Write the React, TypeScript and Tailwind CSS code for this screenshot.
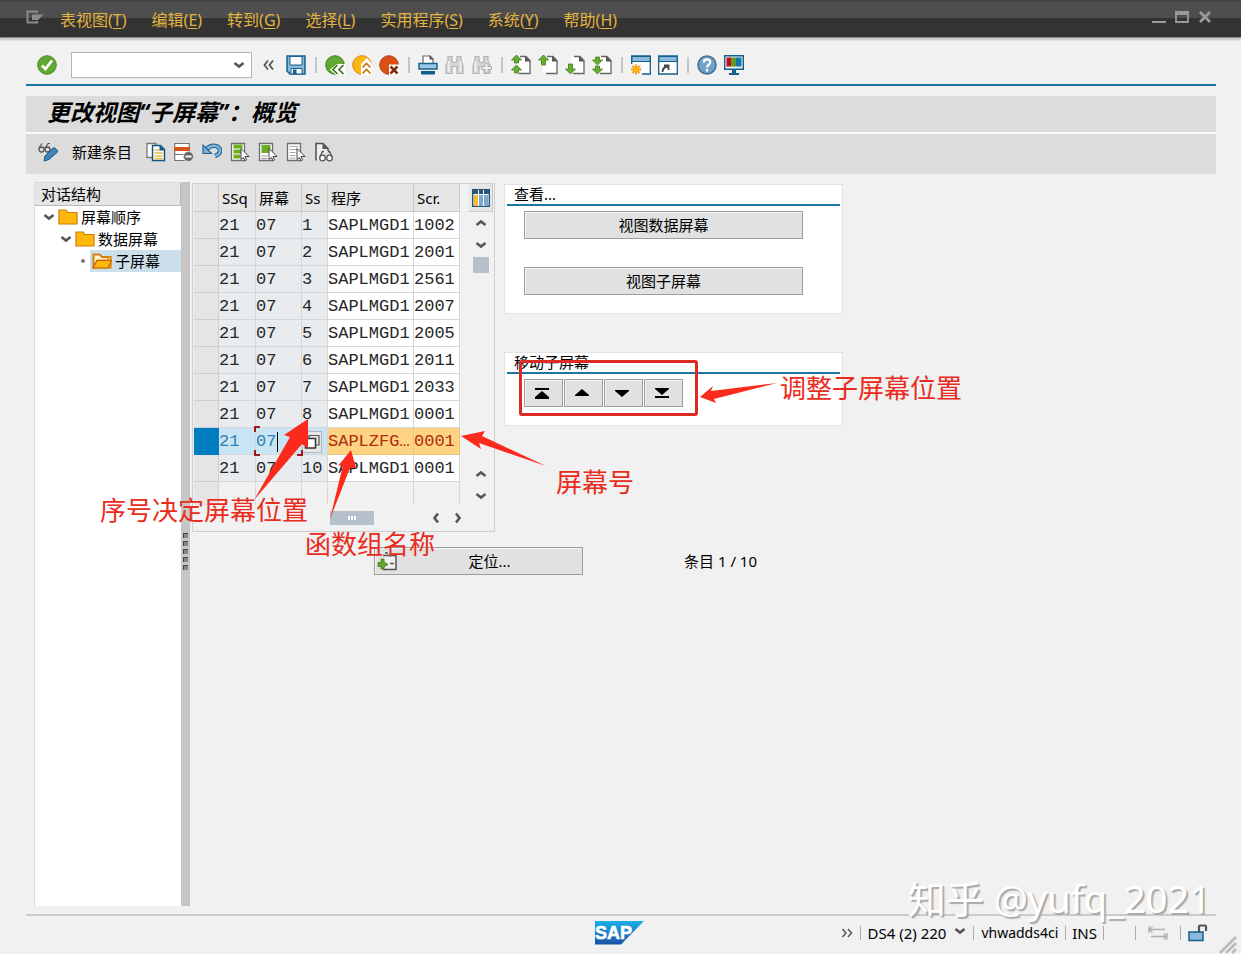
import React from "react";

type P = { children: React.ReactNode; w?: number; h?: number };

function Ico({ children, w = 20, h = 20 }: P) {
  return (
    <svg width={w} height={h} viewBox={`0 0 ${w} ${h}`} fill="none" className="block shrink-0" aria-hidden="true">
      {children}
    </svg>
  );
}

function IconButton({ label, children }: { label: string; children: React.ReactNode }) {
  return (
    <button type="button" aria-label={label} className="block shrink-0">
      {children}
    </button>
  );
}

function Sep() {
  return <span className="ml-0.5 mr-px h-4 w-0.5 shrink-0 bg-[#c3c6c8]" />;
}

function StatusSep() {
  return <span className="h-3.5 w-px shrink-0 bg-[#ababab]" />;
}

function Chevron({ dir }: { dir: "up" | "down" | "left" | "right" }) {
  const d = {
    up: "M1.5 8 6 4.5 10.500 8",
    down: "M1.5 4 6 7.500 10.500 4",
    left: "M8 1.5 4.500 6 8 10.500",
    right: "M4 1.5 7.500 6 4 10.500",
  }[dir];
  return (
    <Ico w={12} h={12}>
      <path d={d} stroke="#555" strokeWidth="2.600" />
    </Ico>
  );
}

const Page = () => (
  <>
    <path d="M7 1.500h8l4 4v13H5V13M7 1.500V3" fill="#fff" />
    <path d="M9 1.500h6l4 4v13H8" stroke="#666" strokeWidth="1.300" />
    <path d="M14 1v5.500h5.500z" fill="#555" />
  </>
);

function Arrow({ y, flip, tall }: { y: number; flip?: boolean; tall?: boolean }) {
  const t = tall ? 5 : 3;
  const d = flip
    ? `M5.500 ${y}l5-5H7.500v-${t}h-4v${t}H.500z`
    : `M5.500 ${y}l5 5H7.500v${t}h-4v-${t}H.500z`;
  return <path d={d} fill="#69ad33" stroke="#3d7d17" strokeWidth=".8" />;
}

const Bino = ({ plus }: { plus?: boolean }) => (
  <Ico>
    <path
      d="M3 1.500h4v4l1 2h3l1-2v-4h4v4l2 5v8h-6v-7H7v7H1v-8l2-5z"
      fill="#d6d6d6"
      stroke="#b3b3b3"
      strokeWidth="1.200"
    />
    <path d="M3.500 6v11M15.500 6v11" stroke="#f2f2f2" strokeWidth="1.500" />
    {plus && <path d="M13 8h3v3.500h3.500v3H16V18h-3v-3.500H9.500v-3H13z" fill="#ececec" stroke="#adadad" />}
  </Ico>
);

const PageLines = ({ children }: { children?: React.ReactNode }) => (
  <Ico>
    <path d="M1.500 1.500h13v17h-13z" fill="#fff" stroke="#6d6d6d" strokeWidth="1.300" />
    {children}
    <path d="M11 6.500v11l2.500-2 1.500 3.500 1.500-1-1.500-3.500h4z" fill="#fff" stroke="#444" />
  </Ico>
);

function Folder({ open }: { open?: boolean }) {
  return (
    <Ico>
      <path d="M1 3h7l2 2.500h9V17H1z" fill="#ffb90a" stroke="#d17c0b" strokeWidth="1.200" />
      {open && (
        <>
          <path d="M2 4h5.500l2 2.500H16V9H5L2 15z" fill="#fff4d0" stroke="#d17c0b" />
          <path d="M1 17 5 9.500h14.500L16 17z" fill="#ffb90a" stroke="#c8640b" strokeWidth="1.200" />
        </>
      )}
    </Ico>
  );
}

const menus: [string, string][] = [
  ["表视图", "T"],
  ["编辑", "E"],
  ["转到", "G"],
  ["选择", "L"],
  ["实用程序", "S"],
  ["系统", "Y"],
  ["帮助", "H"],
];

function TitleBar() {
  return (
    <header className="flex h-[38px] shrink-0 items-center border-b border-[#8a8a8a] bg-[linear-gradient(#3f3f3f_0,#4e4e4e_3px,#4e4e4e_18px,#333_18px,#333_100%)] pl-[26px] pr-[29px] shadow-[0_2px_2px_#c2c2c2]">
      <div className="mb-1 mr-4">
        <Ico w={18} h={14}>
          <path d="M11 3V1.500H1.500v11H11V11" stroke="#8c8c8c" strokeWidth="2" />
          <path d="M6 4.500h11.500L12 10H6z" fill="#8c8c8c" />
        </Ico>
      </div>
      <nav className="flex flex-1 gap-[25px] pt-0.5 text-base text-[#e3b341]">
        {menus.map(([t, k]) => (
          <button key={k} type="button" className="whitespace-nowrap">
            {t}(<u className="underline-offset-2">{k}</u>)
          </button>
        ))}
      </nav>
      <div className="flex items-center gap-[9px] pb-1">
        <IconButton label="最小化">
          <Ico w={14} h={14}>
            <path d="M0 12h14" stroke="#9a9a9a" strokeWidth="2" />
          </Ico>
        </IconButton>
        <IconButton label="最大化">
          <Ico w={14} h={14}>
            <path d="M1 2h12v10H1z" stroke="#9a9a9a" strokeWidth="1.800" />
            <path d="M0 3h14" stroke="#9a9a9a" strokeWidth="4" />
          </Ico>
        </IconButton>
        <IconButton label="关闭">
          <Ico w={14} h={14}>
            <path d="M2 2l10 10M12 2 2 12" stroke="#9a9a9a" strokeWidth="2.800" />
          </Ico>
        </IconButton>
      </div>
    </header>
  );
}

function SystemToolbar() {
  return (
    <div className="ml-[26px] mr-[25px] flex h-12 shrink-0 items-center border-b-2 border-[#1c75a5] pb-px pl-[11px] pt-2">
      <IconButton label="确认">
        <Ico>
          <circle cx="10" cy="10" r="9.300" fill="#5fa832" stroke="#4a8a22" />
          <path d="M5 10.500 8.500 14 15 5.500" stroke="#fff" strokeWidth="2.800" />
        </Ico>
      </IconButton>
      <div className="ml-3.5 flex h-[26px] w-[181px] items-center border border-[#b5b5b5] bg-white pr-1.5">
        <input aria-label="命令" className="h-full min-w-0 flex-1 bg-transparent px-1 outline-none" />
        <Chevron dir="down" />
      </div>
      <button type="button" aria-label="收起" className="ml-[11px] mr-3">
        <Ico w={11} h={12}>
          <path d="M5 1.500 1.500 6 5 10.500M10 1.500 6.500 6 10 10.500" stroke="#555" strokeWidth="1.800" />
        </Ico>
      </button>
      <div className="flex items-center gap-[7px]">
        <IconButton label="保存">
          <Ico>
            <path d="M1 1h18v18H4l-3-3z" fill="#8db9dc" stroke="#155f8c" strokeWidth="1.500" />
            <path d="M4 1.500h12V10H4z" fill="#fff" stroke="#155f8c" />
            <path d="M5 13.500h11V19H5z" fill="#fff" stroke="#155f8c" />
            <path d="M7 14.500h3.500V19H7z" fill="#155f8c" />
          </Ico>
        </IconButton>
        <Sep />
        <IconButton label="返回">
          <Ico>
            <circle cx="10" cy="10" r="9.300" fill="#5fa832" stroke="#3f831d" />
            <path d="M12 9 5 14.500l6 5.500h9V9z" fill="#fff" />
            <path d="M12.500 10 8 14.500l4.500 4.500M18.500 10 14 14.500l4.500 4.500" stroke="#3a7519" strokeWidth="1.700" />
          </Ico>
        </IconButton>
        <IconButton label="退出">
          <Ico>
            <circle cx="10" cy="10" r="9.300" fill="#fdb515" stroke="#d8860c" />
            <path d="M9 20V9l6-6 5 6v11z" fill="#fff" />
            <path d="M10.500 12.500 14.500 8.500l4 4M10.500 18.500l4-4 4 4" stroke="#c9700e" strokeWidth="1.700" />
          </Ico>
        </IconButton>
        <IconButton label="取消">
          <Ico>
            <circle cx="10" cy="10" r="9.300" fill="#dc5113" stroke="#a93d0d" />
            <path d="M10 9.500h10V20H10z" fill="#fff" />
            <path d="M11.500 11.500l7 7M18.500 11.500l-7 7" stroke="#802b10" strokeWidth="2.500" />
          </Ico>
        </IconButton>
        <Sep />
        <IconButton label="打印">
          <Ico>
            <path d="M5 9V1h7l3 3v5z" fill="#fff" stroke="#666" strokeWidth="1.200" />
            <path d="M11.500 0v4.500H16z" fill="#555" />
            <path d="M1 8.500h18V14H1z" fill="#9cc8e6" stroke="#155f8c" strokeWidth="1.400" />
            <path d="M3 16h14v3.500H3z" fill="#0d5f8c" />
          </Ico>
        </IconButton>
        <IconButton label="查找">
          <Bino />
        </IconButton>
        <IconButton label="继续查找">
          <Bino plus />
        </IconButton>
        <Sep />
        <IconButton label="首页">
          <Ico>
            <Page />
            <Arrow y={0} />
            <Arrow y={10} />
          </Ico>
        </IconButton>
        <IconButton label="上一页">
          <Ico>
            <Page />
            <Arrow y={0} tall />
          </Ico>
        </IconButton>
        <IconButton label="下一页">
          <Ico>
            <Page />
            <Arrow y={19} flip tall />
          </Ico>
        </IconButton>
        <IconButton label="末页">
          <Ico>
            <Page />
            <Arrow y={10} flip />
            <Arrow y={19} flip />
          </Ico>
        </IconButton>
        <Sep />
        <IconButton label="新建会话">
          <Ico>
            <path d="M.700 1h18.600v18H.700z" fill="#fff" stroke="#155f8c" strokeWidth="1.300" />
            <path d="M1 1.500h18v5H1z" fill="#8db9dc" stroke="#155f8c" />
            <path d="M0 9h11v11H0z" fill="#f2f2f2" />
            <path d="M5 9.500v10M0 14.500h10M1.500 11l7 7M8.500 11l-7 7" stroke="#f29a12" strokeWidth="1.800" />
            <circle cx="5" cy="14.500" r="2.800" fill="#ffb400" />
          </Ico>
        </IconButton>
        <IconButton label="生成快捷方式">
          <Ico>
            <path d="M.700 1h18.600v18H.700z" fill="#fff" stroke="#155f8c" strokeWidth="1.300" />
            <path d="M1 1.500h18v5H1z" fill="#8db9dc" stroke="#155f8c" />
            <path d="M4.500 17c0-4 2-5 5-5.500M6 10.500h4.500V15" stroke="#444" strokeWidth="1.800" />
          </Ico>
        </IconButton>
        <Sep />
        <IconButton label="帮助">
          <Ico>
            <circle cx="10" cy="10" r="9" fill="#6ea3cb" stroke="#466f91" strokeWidth="1.500" />
            <path d="M6.800 7.500c0-4 6.500-4 6.500-.300 0 2.500-3.200 2.500-3.200 5.300M10.100 14v2.500" stroke="#fff" strokeWidth="2.200" />
          </Ico>
        </IconButton>
        <IconButton label="定制本地布局">
          <Ico>
            <path d="M.700.700h18.600v13.600H.700z" fill="#e6eef4" stroke="#155f8c" strokeWidth="1.400" />
            <path d="M2.500 2.500H7v9H2.500z" fill="#c40d1c" />
            <path d="M7 2.500h5v9H7z" fill="#5d9c28" />
            <path d="M12 2.500h5.500v9H12z" fill="#1079a8" />
            <path d="M8 15h4v3h3v2H5v-2h3z" fill="#155f8c" />
          </Ico>
        </IconButton>
      </div>
    </div>
  );
}

function ViewToolbar() {
  return (
    <div className="flex h-10 items-center bg-[#dcdcdc] pb-1 pl-3">
      <IconButton label="显示/更改">
        <Ico>
          <circle cx="3.500" cy="7.500" r="2.500" stroke="#555" strokeWidth="1.300" />
          <circle cx="9.500" cy="7.500" r="2.500" stroke="#555" strokeWidth="1.300" />
          <path d="M1 6 4 1.500M7 6l3-4.500h2" stroke="#555" strokeWidth="1.200" />
          <path d="M6 19l1-5 8-8h2l2.500 2.500v1.500L11 17.500z" fill="#3f86b8" stroke="#1c5c8a" />
        </Ico>
      </IconButton>
      <button type="button" className="ml-3.5 mr-3.5 whitespace-nowrap">
        新建条目
      </button>
      <div className="flex gap-2">
        <IconButton label="复制">
          <Ico>
            <path d="M1 1.500h9v14H1z" fill="#fff" stroke="#777" strokeWidth="1.300" />
            <path d="M6.500 3.500h8l4 4v11h-12z" fill="#fff" stroke="#12577f" strokeWidth="1.500" />
            <path d="M8.500 8h5M8.500 11h8M8.500 14h8M8.500 16.500h8" stroke="#e7c13b" strokeWidth="1.300" />
            <path d="M13.500 3v5.500h5z" fill="#12577f" />
          </Ico>
        </IconButton>
        <IconButton label="删除">
          <Ico>
            <path d="M.700 1.500h14.600v17H.700z" fill="#fff" stroke="#777" strokeWidth="1.200" />
            <path d="M0 5h16v4H0z" fill="#d9541a" />
            <path d="M.500 12.500h9" stroke="#777" />
            <circle cx="14.500" cy="14.500" r="5" fill="#666" stroke="#ddd" />
            <path d="M11.500 14.500h6" stroke="#fff" strokeWidth="2" />
          </Ico>
        </IconButton>
        <IconButton label="撤消">
          <Ico>
            <path d="M5 7c4-5 13-4 13 2 0 3-2 4-5 5" stroke="#1f5f8f" strokeWidth="4.500" />
            <path d="M5 7c4-5 13-4 13 2 0 3-2 4-5 5" stroke="#7fb3da" strokeWidth="2.500" />
            <path d="M1 3v8.500h8.500z" fill="#7fb3da" stroke="#1f5f8f" strokeWidth="1.100" />
          </Ico>
        </IconButton>
        <IconButton label="全选">
          <PageLines>
            <path d="M3.500 4.500h9M3.500 9.500h8M3.500 14.500h7" stroke="#6fae23" strokeWidth="4" />
          </PageLines>
        </IconButton>
        <IconButton label="选择块">
          <PageLines>
            <path d="M3.500 3h9v8h-9z" fill="#6fae23" />
            <path d="M3.500 14h6M3.500 16.500h6" stroke="#999" />
          </PageLines>
        </IconButton>
        <IconButton label="取消全选">
          <PageLines>
            <path d="M3.500 4.500h9M3.500 7.500h9M3.500 10.500h6M3.500 13.500h6M3.500 16h6" stroke="#aaa" />
          </PageLines>
        </IconButton>
        <IconButton label="打印字段">
          <Ico>
            <path d="M2 18.500v-17h7l5 5V9" fill="#eee" stroke="#555" strokeWidth="1.600" />
            <path d="M8.500 1v6H14z" fill="#555" />
            <circle cx="8.500" cy="16" r="2.800" fill="#fff" stroke="#555" strokeWidth="1.300" />
            <circle cx="15.500" cy="16" r="2.800" fill="#fff" stroke="#555" strokeWidth="1.300" />
            <path d="M6 15 8.500 9.500h1.500M18 15l-2.500-5.500H14" stroke="#555" strokeWidth="1.400" />
          </Ico>
        </IconButton>
      </div>
    </div>
  );
}

function Tree() {
  return (
    <aside className="w-[147px] shrink-0 border-l border-t border-[#dadada] bg-white">
      <h2 className="h-[23px] border-b border-r border-[#b9b9b9] bg-[#e5e5e5] pl-1.5 leading-[22px]">对话结构</h2>
      <ul className="leading-[22px]">
        <li>
          <div className="flex h-[22px] items-center pl-2">
            <Chevron dir="down" />
            <span className="ml-[3px] mr-[3px]">
              <Folder />
            </span>
            屏幕顺序
          </div>
          <ul>
            <li>
              <div className="flex h-[22px] items-center pl-[25px]">
                <Chevron dir="down" />
                <span className="ml-[3px] mr-[3px]">
                  <Folder />
                </span>
                数据屏幕
              </div>
              <ul>
                <li className="flex h-[22px] items-center pl-[46px]">
                  <span className="mr-[5px] size-1 rounded-full bg-[#777]" />
                  <span className="flex h-full flex-1 items-center gap-[3px] bg-[#cbe0eb] pl-0.5">
                    <Folder open />
                    子屏幕
                  </span>
                </li>
              </ul>
            </li>
          </ul>
        </li>
      </ul>
    </aside>
  );
}

const rows = [
  ["1", "SAPLMGD1", "1002"],
  ["2", "SAPLMGD1", "2001"],
  ["3", "SAPLMGD1", "2561"],
  ["4", "SAPLMGD1", "2007"],
  ["5", "SAPLMGD1", "2005"],
  ["6", "SAPLMGD1", "2011"],
  ["7", "SAPLMGD1", "2033"],
  ["8", "SAPLMGD1", "0001"],
  ["", "SAPLZFG…", "0001"],
  ["10", "SAPLMGD1", "0001"],
];

const key = "border-r border-b border-[#d3d7da] bg-[#e8ecef] p-0 pt-0.5";
const val = "border-r border-b border-[#d3d7da] bg-white p-0 pt-0.5";
const keySel = "border-r border-b border-[#d3d7da] bg-[#c8e4f5] p-0 pt-0.5 text-[#2f80b0]";
const valSel = "border-r border-b border-[#e8c67c] bg-[#fed382] p-0 pt-0.5 text-[#b02a0c]";
const head = "border-r border-b border-[#c9c9c9] bg-[#e5e5e5] p-0 pl-[3px] text-left font-normal";

function SubscreenTable() {
  return (
    <section className="w-[303px] shrink-0 border border-[#cfcfcf] pl-px">
      <div className="flex">
        <table className="w-[266px] table-fixed border-separate border-spacing-0">
          <colgroup>
            <col className="w-[25px]" />
            <col className="w-[37px]" />
            <col className="w-[46px]" />
            <col className="w-[26px]" />
            <col className="w-[86px]" />
            <col className="w-[46px]" />
          </colgroup>
          <thead>
            <tr className="h-7">
              <th className={head} aria-label="选择" />
              <th className={head}>SSq</th>
              <th className={head}>屏幕</th>
              <th className={head}>Ss</th>
              <th className={head}>程序</th>
              <th className={head}>Scr.</th>
            </tr>
          </thead>
          <tbody className="font-['Liberation_Mono',monospace] text-[17px] leading-6 text-[#262626]">
            {rows.map(([n, prog, scr], i) => {
              const sel = i === 8;
              const k = sel ? keySel : key;
              const v = sel ? valSel : val;
              return (
                <tr key={i} className="h-[27px]">
                  <td className={sel ? "bg-[#007cc0] p-0" : "border-r border-b border-[#cfcfcf] bg-[#e5e5e5] p-0"} />
                  <td className={k}>21</td>
                  <td className={k}>
                    {sel ? (
                      <div className="relative flex h-6 items-center">
                        <input
                          aria-label="屏幕"
                          defaultValue="07"
                          className="h-6 w-[21px] bg-transparent p-0 outline-none"
                        />
                        <span className="h-5 w-px bg-black" />
                        <span className="absolute -left-0.5 -top-1 size-1.5 border-l-2 border-t-2 border-[#a01818]" />
                        <span className="absolute -bottom-0.5 -left-0.5 size-1.5 border-b-2 border-l-2 border-[#a01818]" />
                        <span className="absolute -bottom-0.5 -right-0.5 size-1.5 border-b-2 border-r-2 border-[#a01818]" />
                      </div>
                    ) : (
                      "07"
                    )}
                  </td>
                  <td className={k}>
                    {sel ? (
                      <button
                        type="button"
                        aria-label="搜索帮助"
                        className="flex h-[22px] w-5 items-center justify-center border border-[#b5b5b5] bg-[#e6e6e6]"
                      >
                        <Ico w={16} h={16}>
                          <path d="M5 4V1.500h10V11h-3" stroke="#555" strokeWidth="1.200" />
                          <path d="M1.500 4.500h10v9.500h-10z" fill="#fff" stroke="#333" strokeWidth="1.500" />
                        </Ico>
                      </button>
                    ) : (
                      n
                    )}
                  </td>
                  <td className={v}>{prog}</td>
                  <td className={v}>{scr}</td>
                </tr>
              );
            })}
            <tr className="h-[23px]">
              <td className="border-r border-[#d3d3d3] bg-[#e5e5e5] p-0" />
              <td className="border-r border-[#d8d8d8] p-0" />
              <td className="border-r border-[#d8d8d8] p-0" />
              <td className="border-r border-[#d8d8d8] p-0" />
              <td className="border-r border-[#d8d8d8] p-0" />
              <td className="border-r border-[#d8d8d8] p-0" />
            </tr>
          </tbody>
        </table>
        <div className="flex flex-1 flex-col items-center pl-2">
          <button
            type="button"
            aria-label="配置"
            className="flex h-7 w-6 items-center justify-center border-b border-r border-[#c9c9c9] bg-[#e5e5e5]"
          >
            <Ico w={18} h={18}>
              <path d="M.700.700h16.600v16.600H.700z" fill="#fff" stroke="#27567a" strokeWidth="1.400" />
              <path d="M1 1h16v4H1z" fill="#27567a" />
              <path d="M2 6h4v11H2z" fill="#f5bd2c" />
              <path d="M7 6h4v11H7zM12 6h4v11h-4z" fill="#7fa8cc" />
              <path d="M6.500 1v16M11.500 1v16" stroke="#fff" />
            </Ico>
          </button>
          <button type="button" aria-label="向上滚动" className="mt-[5px]">
            <Chevron dir="up" />
          </button>
          <button type="button" aria-label="向下滚动" className="mt-2.5">
            <Chevron dir="down" />
          </button>
          <span className="mt-1.5 size-4 bg-[#b5c0cb]" />
          <button type="button" aria-label="上一行" className="mb-2.5 mt-auto">
            <Chevron dir="up" />
          </button>
          <button type="button" aria-label="下一行" className="mb-[3px]">
            <Chevron dir="down" />
          </button>
        </div>
      </div>
      <div className="flex h-[26px] items-center pl-[136px]">
        <span className="flex h-3.5 w-11 items-center justify-center gap-px bg-[#b5c0cb]">
          <i className="h-1 w-0.5 bg-white" />
          <i className="h-1 w-0.5 bg-white" />
          <i className="h-1 w-0.5 bg-white" />
        </span>
        <button type="button" aria-label="向左滚动" className="ml-14">
          <Chevron dir="left" />
        </button>
        <button type="button" aria-label="向右滚动" className="ml-2.5">
          <Chevron dir="right" />
        </button>
      </div>
    </section>
  );
}

function Panel({ title, children }: { title: string; children: React.ReactNode }) {
  return (
    <section className="border border-[#e2e2e2] bg-white px-0.5">
      <h2 className="h-[21px] border-b-2 border-[#1c75a5] pl-[7px] leading-[18px]">{title}</h2>
      {children}
    </section>
  );
}

const btn = "h-7 border border-[#9d9d9d] bg-[#e1e1e1] text-black shadow-[inset_1px_1px_0_#f4f4f4]";

function MoveButton({ label, d }: { label: string; d: string }) {
  return (
    <button type="button" aria-label={label} className={`${btn} flex w-[39px] items-center justify-center pr-[3px]`}>
      <Ico w={16} h={16}>
        <path d={d} fill="#000" />
      </Ico>
    </button>
  );
}

function StatusBar() {
  return (
    <footer className="ml-[26px] mr-[25px] flex h-10 shrink-0 items-center border-t-2 border-[#cbcbcb] pb-1">
      <div className="flex flex-1 justify-end pr-[196px]">
        <svg width="50" height="24" viewBox="0 0 50 24" role="img" aria-label="SAP">
          <defs>
            <linearGradient id="sap" x1="0" y1="0" x2="0" y2="1">
              <stop offset="0" stopColor="#19b0e8" />
              <stop offset="1" stopColor="#1b50a8" />
            </linearGradient>
          </defs>
          <path d="M0 0h49L26 23.500H0z" fill="url(#sap)" />
          <text x="0" y="18" fontFamily="Liberation Sans, sans-serif" fontWeight="700" fontSize="18" fill="#fff" stroke="#fff" strokeWidth=".6">
            SAP
          </text>
        </svg>
      </div>
      <div className="flex items-center whitespace-nowrap">
        <Ico w={12} h={12}>
          <path d="M1.500 2 5 6 1.500 10M7 2l3.500 4L7 10" stroke="#555" strokeWidth="1.500" />
        </Ico>
        <span className="ml-[7px] mr-1.5 flex">
          <StatusSep />
        </span>
        <span>DS4 (2) 220</span>
        <span className="mb-1 ml-2 mr-[7px]">
          <Chevron dir="down" />
        </span>
        <StatusSep />
        <span className="mx-[7px] text-sm">vhwadds4ci</span>
        <StatusSep />
        <span className="mx-1.5">INS</span>
        <StatusSep />
        <span className="ml-[31px] mr-3 flex">
          <StatusSep />
        </span>
        <Ico w={20} h={16}>
          <path d="M1 1v7M1 4.500h16M4.500 1.500 1.500 4.500l3 3M19 8v7M19 11.500H3M15.500 8.500l3 3-3 3" stroke="#b0b0b0" strokeWidth="1.300" />
        </Ico>
        <span className="ml-3 mr-[7px] flex">
          <StatusSep />
        </span>
        <Ico>
          <path d="M11 9V3.500q0-1 1-1h5q1 0 1 1V8" stroke="#555" strokeWidth="2.200" />
          <path d="M1 9h14v8.500H1z" fill="#8ab8dc" stroke="#155f8c" strokeWidth="1.500" />
        </Ico>
        <span className="w-2" />
      </div>
    </footer>
  );
}

const note = "absolute whitespace-nowrap text-[26px] leading-8 text-[#ea2b20]";

function Annotations() {
  return (
    <div className="pointer-events-none absolute inset-0 overflow-hidden">
      <svg className="absolute inset-0 h-full w-full" fill="#fb2a1c" aria-hidden="true">
        <path d="M308 419 284 435 290 437 254 500 302 444 308 448z" />
        <path d="M351 450 338 466 343 465 330 519 350 468 356 468z" />
        <path d="M461 436 485 431 482 436 546 466 479 443 481 449z" />
        <path d="M700 397 713 386 711 391 777 383 714 399 716 403z" />
      </svg>
      <div className="absolute left-[519px] top-[360px] h-14 w-[179px] rounded-[3px] border-3 border-[#dd2a22]" />
      <p className={`${note} left-[780px] top-[372px]`}>调整子屏幕位置</p>
      <p className={`${note} left-[556px] top-[466px]`}>屏幕号</p>
      <p className={`${note} left-[100px] top-[494px]`}>序号决定屏幕位置</p>
      <p className={`${note} left-[305px] top-[528px]`}>函数组名称</p>
      <p className="absolute bottom-8 right-[30px] whitespace-nowrap text-[38px] leading-12 text-white [text-shadow:2px_2px_1px_#a9a9a9]">
        知乎 @yufq_2021
      </p>
      <svg className="absolute bottom-0 right-0" width="22" height="18" viewBox="0 0 22 18" aria-hidden="true">
        <path d="M1 17 17 1M7 17 17 7M13 17l4-4" stroke="#b9b9b9" strokeWidth="2.500" />
      </svg>
    </div>
  );
}

export default function App() {
  return (
    <div className="relative flex min-h-screen flex-col bg-[#f1f1f1] font-['Noto_Sans','Noto_Sans_CJK_SC',sans-serif] text-[15px] leading-5 text-black">
      <TitleBar />
      <SystemToolbar />
      <div className="ml-[26px] mr-[25px] mt-2.5">
        <h1 className="h-9 bg-[#dcdcdc] pl-[21px] text-[23px] font-bold italic leading-8">更改视图“子屏幕”：概览</h1>
        <div className="h-0.5 bg-[#fbfbfb]" />
        <ViewToolbar />
      </div>
      <main className="mb-2 ml-[34px] mr-[25px] mt-2 flex flex-1">
        <Tree />
        <div className="mr-0.5 flex w-[9px] shrink-0 flex-col gap-[3px] bg-[#c6c6c6] pt-[351px]">
          {[0, 1, 2, 3, 4].map((i) => (
            <i key={i} className="ml-0.5 size-[5px] border-l border-t border-[#444] bg-[#888]" />
          ))}
        </div>
        <div className="flex-1">
          <div className="flex items-start gap-[9px] pt-px">
            <SubscreenTable />
            <div className="mt-px flex w-[339px] flex-col gap-[38px]">
              <Panel title="查看...">
                <div className="flex flex-col gap-7 px-[17px] pb-[18px] pt-[5px]">
                  <button type="button" className={`${btn} w-[279px]`}>
                    视图数据屏幕
                  </button>
                  <button type="button" className={`${btn} w-[279px]`}>
                    视图子屏幕
                  </button>
                </div>
              </Panel>
              <Panel title="移动子屏幕">
                <div className="flex gap-px px-[17px] pb-[18px] pt-[5px]">
                  <MoveButton label="移到首位" d="M1 3h14v2H1zM8 6l7 6v2H1v-2z" />
                  <MoveButton label="上移" d="M8 4l7 6v1H1v-1z" />
                  <MoveButton label="下移" d="M8 12 1 6V5h14v1z" />
                  <MoveButton label="移到末位" d="M1 11h14v2H1zM8 10 1 4V3h14v1z" />
                </div>
              </Panel>
            </div>
          </div>
          <div className="mt-[15px] flex items-center gap-[101px] pl-[182px]">
            <button type="button" className={`${btn} flex w-[209px] items-center pl-0.5`}>
              <Ico>
                <path d="M6 4.500h13v14H6" fill="#eee" stroke="#555" strokeWidth="1.500" />
                <path d="M13 12.500h4M8 2h3" stroke="#555" strokeWidth="1.500" />
                <path d="M4 8h3v3l4 2.500L7 16v2H4v-2.500H1v-4h3z" fill="#63a62f" stroke="#3d7d17" strokeWidth=".8" />
              </Ico>
              <span className="flex-1 text-center">定位...</span>
            </button>
            <span>条目 1 / 10</span>
          </div>
        </div>
      </main>
      <StatusBar />
      <Annotations />
    </div>
  );
}
